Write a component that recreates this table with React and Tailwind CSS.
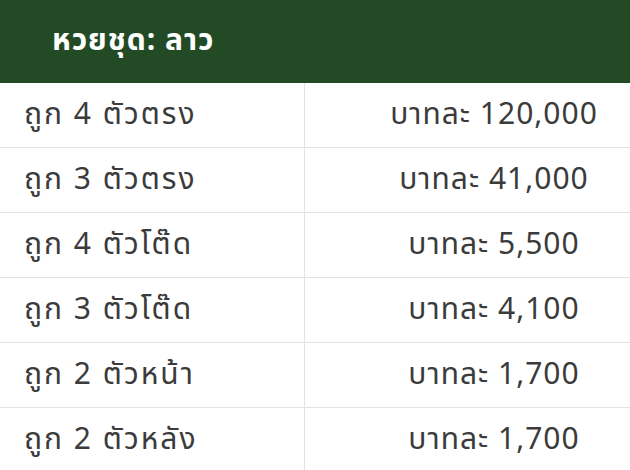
const rows = [
  ["ถูก 4 ตัวตรง", "บาทละ 120,000"],
  ["ถูก 3 ตัวตรง", "บาทละ 41,000"],
  ["ถูก 4 ตัวโต๊ด", "บาทละ 5,500"],
  ["ถูก 3 ตัวโต๊ด", "บาทละ 4,100"],
  ["ถูก 2 ตัวหน้า", "บาทละ 1,700"],
  ["ถูก 2 ตัวหลัง", "บาทละ 1,700"],
];

export default function App() {
  return (
    <div className="w-[630px] h-[470px] overflow-hidden bg-white font-['Noto_Sans_Thai','Noto_Sans_Thai_UI','Noto_Sans',sans-serif]">
      {/* header */}
      <div className="h-[83px] bg-[#224b25] flex items-center pl-[52px]">
        <p className="text-white text-[30px] font-bold tracking-[1px]">หวยชุด: ลาว</p>
      </div>
      {/* rows */}
      {rows.map(([label, price], i) => (
        <div key={i} className="flex h-[65px] border-b border-[#e2e2e2]">
          <div className="w-[305px] border-r border-[#e2e2e2] flex items-center pl-[24px]">
            <p className="text-[30px] text-[#3b3b3b] tracking-[2px]">{label}</p>
          </div>
          <div className="flex-1 flex items-center justify-center pl-[53px]">
            <p className="text-[30px] text-[#3b3b3b] tracking-[1px]">{price}</p>
          </div>
        </div>
      ))}
    </div>
  );
}
